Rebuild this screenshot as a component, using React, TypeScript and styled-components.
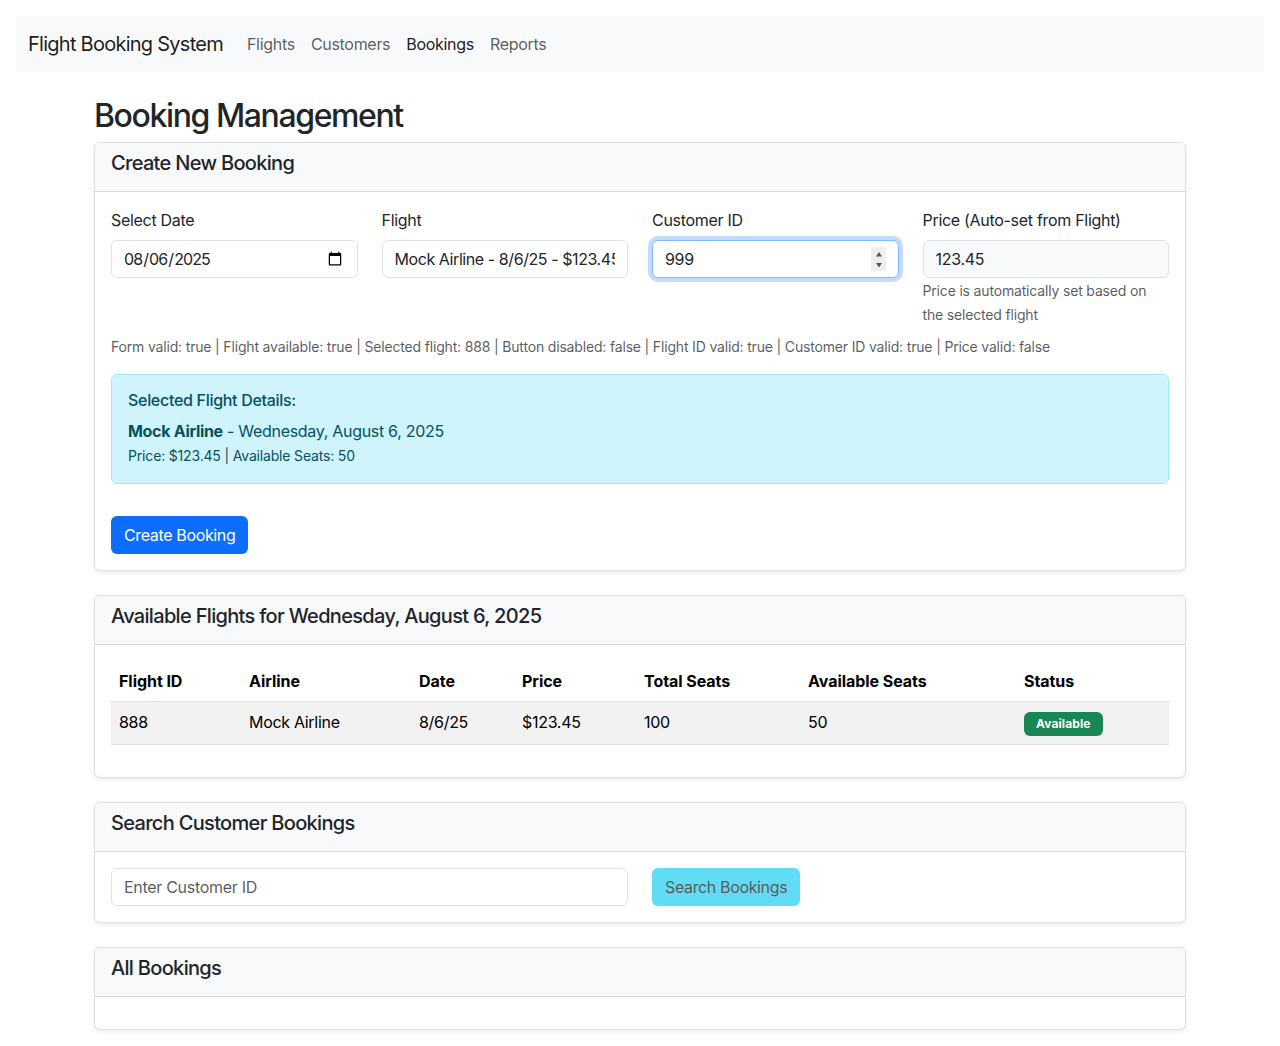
import * as React from "react";
import styled, { createGlobalStyle } from "styled-components";

const GlobalStyle = createGlobalStyle`
  * { box-sizing: border-box; }
  html, body { margin: 0; padding: 0; }
  body {
    background: #fff;
    color: #212529;
    font-family: Inter, "Liberation Sans", sans-serif;
    font-size: 16px;
    line-height: 24px;
    letter-spacing: -0.3px;
  }
`;

const Page = styled.div`
  padding: 16px;
`;

const Navbar = styled.nav`
  display: flex;
  align-items: center;
  height: 56px;
  padding: 0 12px;
  background: #f8f9fa;
`;

const Brand = styled.a`
  font-size: 20px;
  line-height: 30px;
  letter-spacing: -0.74px;
  color: rgba(0, 0, 0, 0.9);
  margin-right: 16px;
`;

const NavLink = styled.a<{ $active?: boolean }>`
  padding: 8px;
  letter-spacing: -0.3px;
  color: ${(p) => (p.$active ? "rgba(0, 0, 0, 0.9)" : "rgba(0, 0, 0, 0.65)")};
`;

const Container = styled.main`
  width: 1092px;
  margin: 24px auto 0;
`;

const Title = styled.h2`
  margin: 0 0 8px;
  padding-top: 2px;
  font-size: 32px;
  font-weight: 500;
  line-height: 36.4px;
  letter-spacing: -1.4px;
`;

const Card = styled.section`
  margin-bottom: 24px;
  background: #fff;
  border: 1px solid rgba(0, 0, 0, 0.125);
  border-radius: 6px;
  box-shadow: 0 2px 4px rgba(0, 0, 0, 0.075);
  overflow: hidden;

  &:last-child {
    margin-bottom: 0;
  }
`;

const CardHeader = styled.header`
  padding: 8px 16px;
  background: #f8f9fa;
  border-bottom: 1px solid rgba(0, 0, 0, 0.125);
`;

const CardTitle = styled.h5`
  margin: 0 0 8px;
  font-size: 20px;
  font-weight: 500;
  line-height: 24px;
  letter-spacing: -0.68px;
`;

const CardBody = styled.div`
  padding: 16px;
  min-height: 32px;
`;

const FormRow = styled.div`
  display: grid;
  grid-template-columns: repeat(4, 1fr);
  gap: 24px;
`;

const Label = styled.label`
  display: block;
  margin-bottom: 8px;
`;

const Control = styled.input<{ $focused?: boolean }>`
  display: block;
  width: 100%;
  height: 38px;
  padding: 6px 12px;
  font: inherit;
  letter-spacing: inherit;
  color: #212529;
  background: #fff;
  border: 1px solid ${(p) => (p.$focused ? "#86b7fe" : "#dee2e6")};
  border-radius: 6px;
  outline: none;
  box-shadow: ${(p) => (p.$focused ? "0 0 0 4px rgba(13, 110, 253, 0.25)" : "none")};

  &:read-only {
    background: #f8f9fa;
  }

  &[type="date"],
  &[type="number"] {
    background: #fff;
  }

  &[type="date"] {
    letter-spacing: -0.9px;
  }

  &::-webkit-datetime-edit {
    margin-left: -1px;
  }

  &::-webkit-inner-spin-button {
    appearance: none;
  }

  &::placeholder {
    color: rgba(33, 37, 41, 0.75);
  }
`;

const NumberField = styled.div`
  position: relative;
`;

const Spinner = styled.svg`
  position: absolute;
  top: 7px;
  right: 13px;
  width: 15px;
  height: 24px;
  background: #efefef;
  fill: #555;
`;

const SelectControl = styled.select`
  display: block;
  width: 100%;
  height: 38px;
  padding: 6px 12px;
  font: inherit;
  letter-spacing: -0.42px;
  color: #212529;
  background: #fff;
  border: 1px solid #dee2e6;
  border-radius: 6px;
  appearance: none;
  outline: none;
`;

const HelpText = styled.div`
  margin-top: 1px;
  font-size: 14px;
  letter-spacing: -0.17px;
  color: rgba(33, 37, 41, 0.75);
`;

const DebugLine = styled.div`
  margin-top: 8px;
  margin-bottom: 15px;
  font-size: 14px;
  letter-spacing: -0.17px;
  color: rgba(33, 37, 41, 0.75);
`;

const InfoAlert = styled.div`
  padding: 16px;
  margin-bottom: 32px;
  color: #055160;
  background: #cff4fc;
  border: 1px solid #9eeaf9;
  border-radius: 6px;
`;

const AlertHeading = styled.h6`
  margin: 0 0 8px;
  font-size: 16px;
  font-weight: 500;
  line-height: 19.2px;
`;

const AlertLine = styled.div`
  margin: 0;
`;

const AlertSmall = styled.div`
  font-size: 14px;
  letter-spacing: -0.17px;
  margin-top: 1px;
  line-height: 23px;
`;

const Strong = styled.strong`
  font-weight: 700;
`;

const Button = styled.button<{ $variant: "primary" | "info" }>`
  height: 38px;
  padding: 6px 12px;
  font: inherit;
  letter-spacing: -0.36px;
  border: 1px solid transparent;
  border-radius: 6px;
  color: ${(p) => (p.$variant === "primary" ? "#fff" : "#000")};
  background: #${(p) => (p.$variant === "primary" ? "0d6efd" : "0dcaf0")};
  opacity: ${(p) => (p.$variant === "primary" ? 1 : 0.65)};
`;

const Table = styled.table`
  width: 100%;
  margin-bottom: 16px;
  border-collapse: collapse;
  table-layout: fixed;
`;

const Th = styled.th<{ $width: number }>`
  width: ${(p) => p.$width}px;
  padding: 8px;
  text-align: left;
  font-weight: 700;
  letter-spacing: -0.05px;
  color: #000;
  border-bottom: 1px solid #dee2e6;
`;

const Td = styled.td`
  height: 43px;
  padding: 7px 8px 9px;
  color: #000;
  background: rgba(0, 0, 0, 0.05);
  border-bottom: 1px solid #dee2e6;
`;

const BadgeCell = styled(Td)`
  padding: 9px 8px 7px;
  line-height: 0;
`;

const Badge = styled.span`
  display: inline-block;
  padding: 4.2px 12px;
  font-size: 12px;
  font-weight: 700;
  line-height: 15.6px;
  letter-spacing: 0.1px;
  color: #fff;
  background: #198754;
  border-radius: 6px;
  vertical-align: middle;
`;

const SearchRow = styled.div`
  display: grid;
  grid-template-columns: 1fr 1fr;
  gap: 24px;
`;

const SearchAction = styled.div`
  display: flex;
`;

const columns = [
  { name: "Flight ID", width: 130 },
  { name: "Airline", width: 170 },
  { name: "Date", width: 103 },
  { name: "Price", width: 122 },
  { name: "Total Seats", width: 164 },
  { name: "Available Seats", width: 216 },
  { name: "Status", width: 153 },
];

export default function App() {
  return (
    <Page>
      <GlobalStyle />
      <Navbar>
        <Brand>Flight Booking System</Brand>
        <NavLink>Flights</NavLink>
        <NavLink>Customers</NavLink>
        <NavLink $active>Bookings</NavLink>
        <NavLink>Reports</NavLink>
      </Navbar>
      <Container>
        <Title>Booking Management</Title>

        <Card>
          <CardHeader>
            <CardTitle>Create New Booking</CardTitle>
          </CardHeader>
          <CardBody>
            <FormRow>
              <div>
                <Label>Select Date</Label>
                <Control type="date" defaultValue="2025-08-06" />
              </div>
              <div>
                <Label>Flight</Label>
                <SelectControl defaultValue="888">
                  <option value="888">Mock Airline - 8/6/25 - $123.45 (50 seats available)</option>
                </SelectControl>
              </div>
              <div>
                <Label>Customer ID</Label>
                <NumberField>
                  <Control type="number" defaultValue="999" $focused />
                  <Spinner viewBox="0 0 15 24">
                    <path d="M5 9.5L8 5l3 4.5z" />
                    <path d="M5 16h6l-3 4.5z" />
                  </Spinner>
                </NumberField>
              </div>
              <div>
                <Label>Price (Auto-set from Flight)</Label>
                <Control type="text" defaultValue="123.45" readOnly />
                <HelpText>Price is automatically set based on the selected flight</HelpText>
              </div>
            </FormRow>
            <DebugLine>
              Form valid: true | Flight available: true | Selected flight: 888 | Button disabled: false | Flight ID valid: true | Customer ID valid: true | Price valid: false
            </DebugLine>
            <InfoAlert>
              <AlertHeading>Selected Flight Details:</AlertHeading>
              <AlertLine>
                <Strong>Mock Airline</Strong> - Wednesday, August 6, 2025
              </AlertLine>
              <AlertSmall>Price: $123.45 | Available Seats: 50</AlertSmall>
            </InfoAlert>
            <Button $variant="primary">Create Booking</Button>
          </CardBody>
        </Card>

        <Card>
          <CardHeader>
            <CardTitle>Available Flights for Wednesday, August 6, 2025</CardTitle>
          </CardHeader>
          <CardBody>
            <Table>
              <thead>
                <tr>
                  {columns.map((c) => (
                    <Th key={c.name} $width={c.width}>
                      {c.name}
                    </Th>
                  ))}
                </tr>
              </thead>
              <tbody>
                <tr>
                  <Td>888</Td>
                  <Td>Mock Airline</Td>
                  <Td>8/6/25</Td>
                  <Td>$123.45</Td>
                  <Td>100</Td>
                  <Td>50</Td>
                  <BadgeCell>
                    <Badge>Available</Badge>
                  </BadgeCell>
                </tr>
              </tbody>
            </Table>
          </CardBody>
        </Card>

        <Card>
          <CardHeader>
            <CardTitle>Search Customer Bookings</CardTitle>
          </CardHeader>
          <CardBody>
            <SearchRow>
              <Control type="text" placeholder="Enter Customer ID" />
              <SearchAction>
                <Button $variant="info">Search Bookings</Button>
              </SearchAction>
            </SearchRow>
          </CardBody>
        </Card>

        <Card>
          <CardHeader>
            <CardTitle>All Bookings</CardTitle>
          </CardHeader>
          <CardBody />
        </Card>
      </Container>
    </Page>
  );
}
